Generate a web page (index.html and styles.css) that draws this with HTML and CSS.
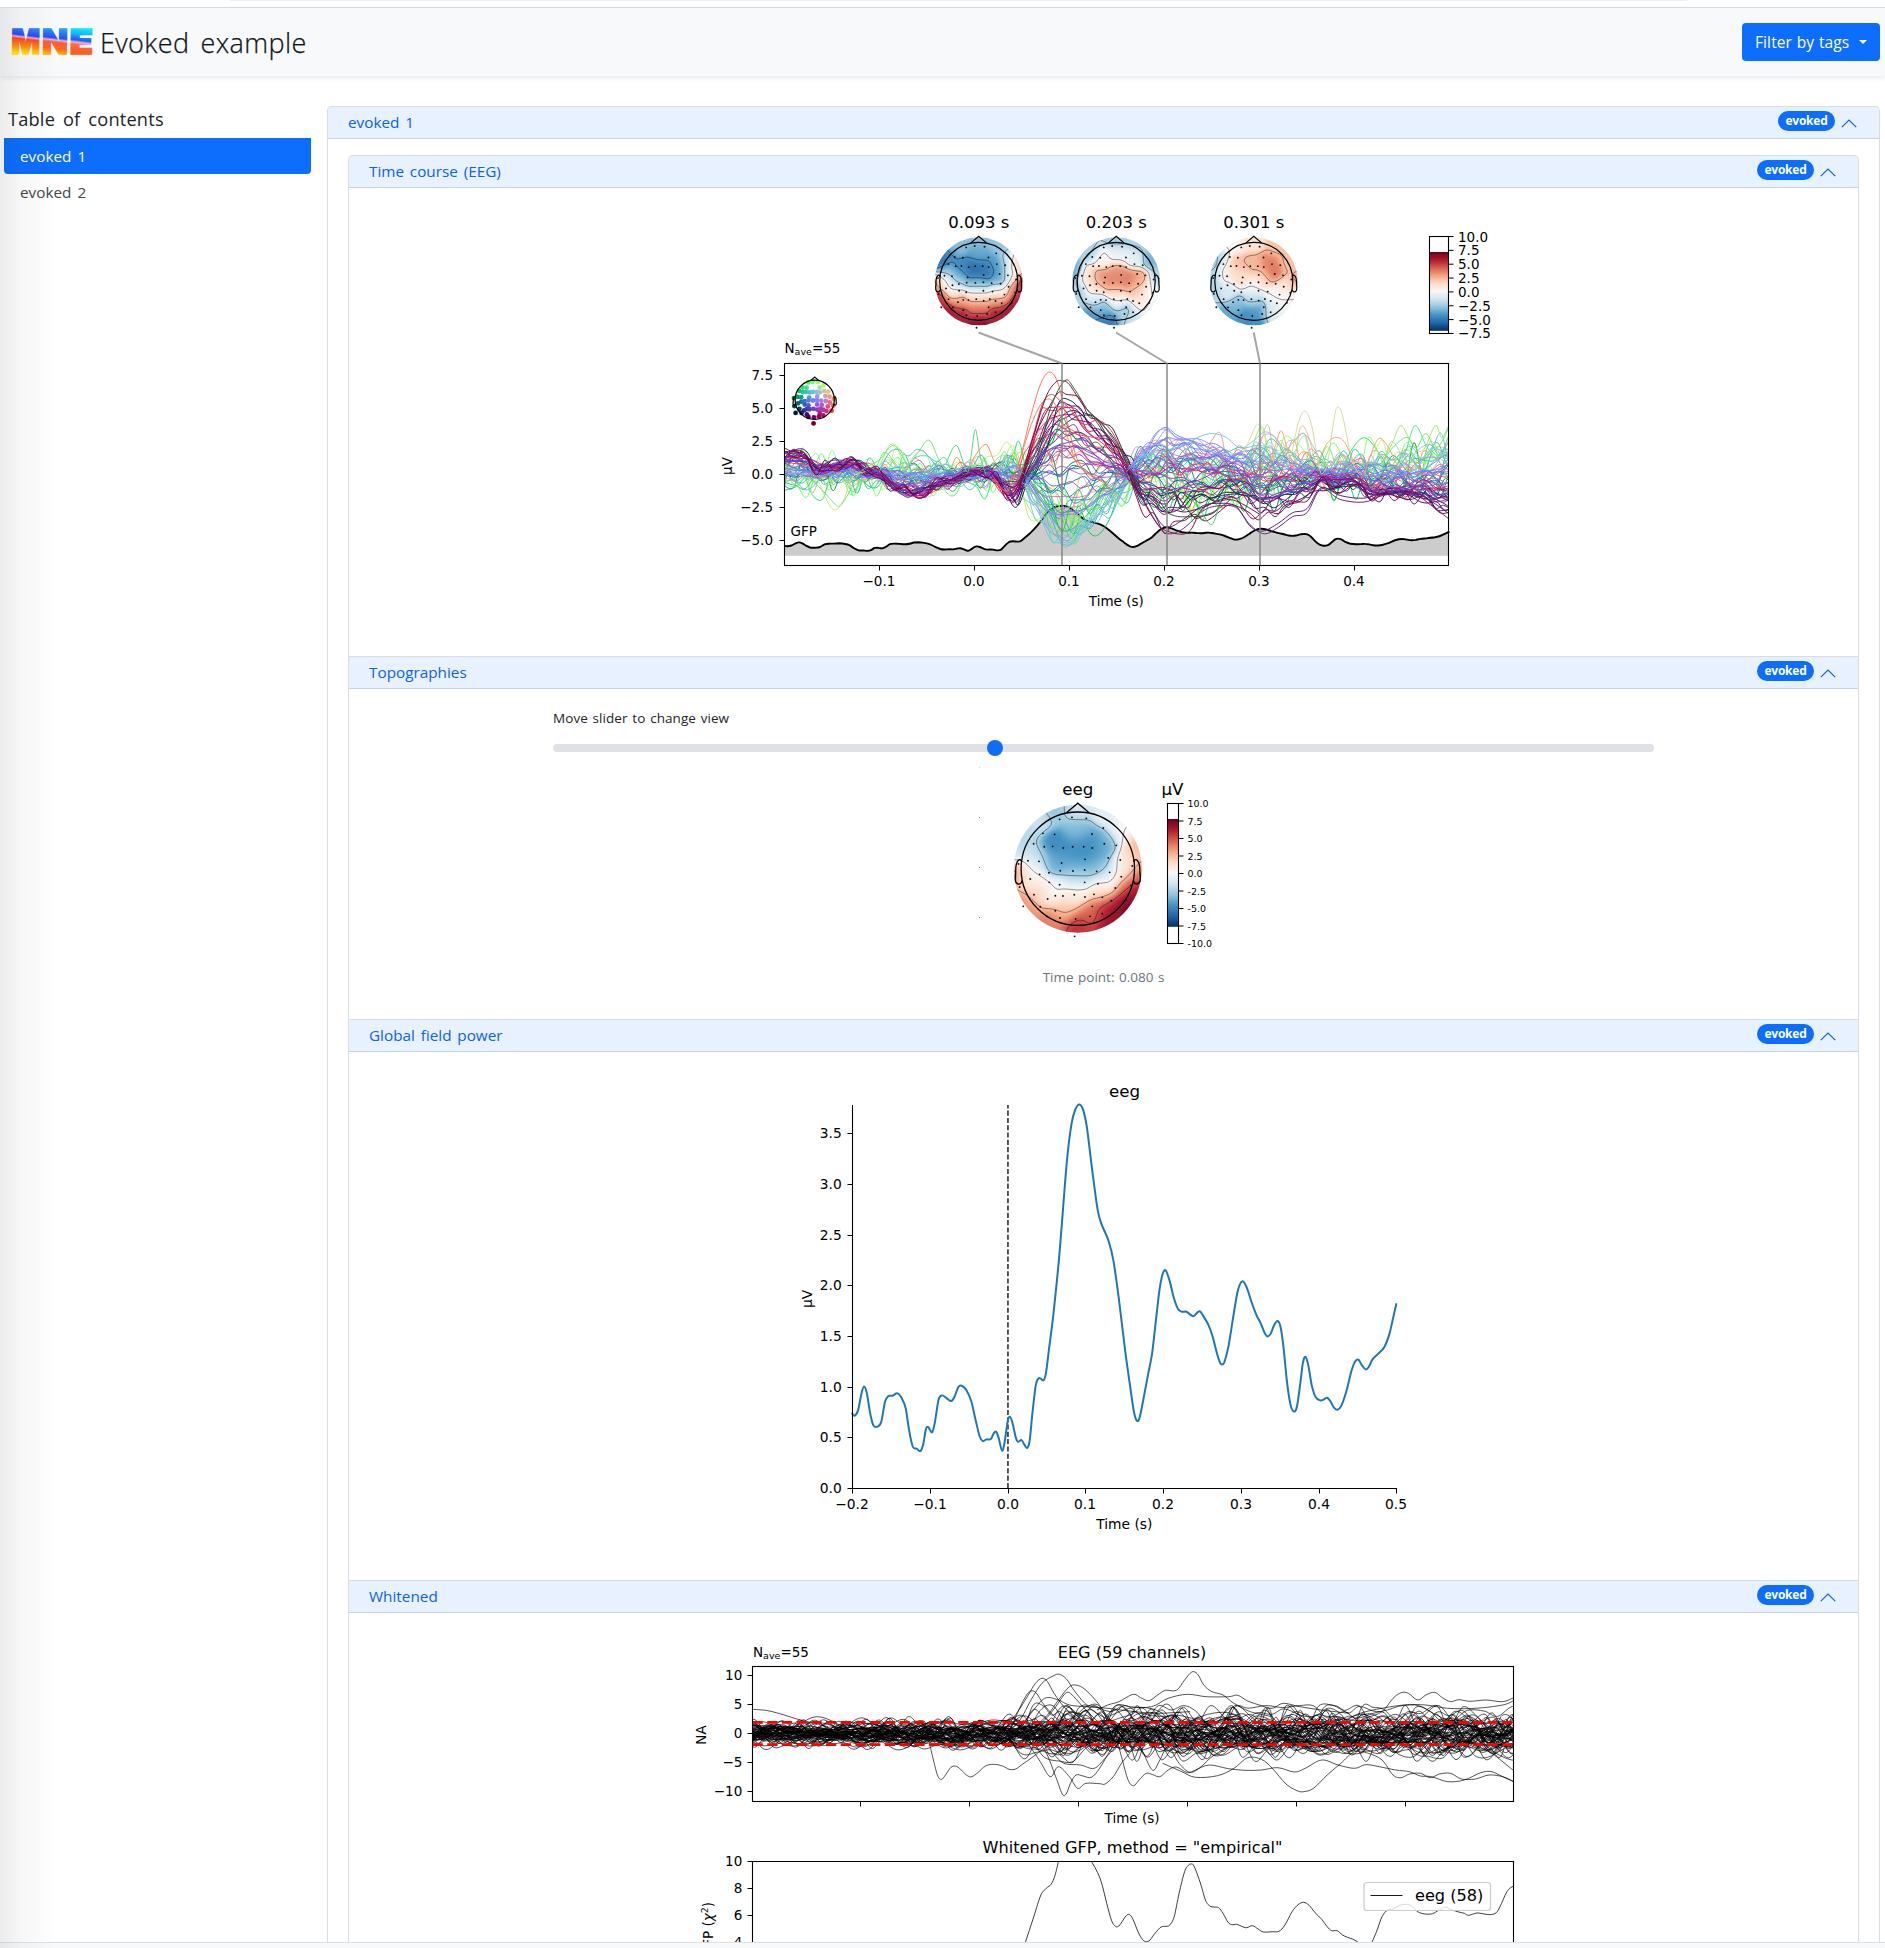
FILE: index.html
```html
<!DOCTYPE html>
<html lang="en">
<head>
<meta charset="utf-8">
<title>Evoked example</title>
<link rel="stylesheet" href="styles.css">
</head>
<body>
<div class="page">
  <div class="topline"><span class="topline-tab"></span></div>
  <header class="navbar">
    <div class="brand">
      <svg class="logo" width="84" height="36" viewBox="0 -2 84 36" role="img" aria-label="MNE">
        <defs>
          <linearGradient id="fillM" gradientUnits="userSpaceOnUse" x1="17" y1="2" x2="14" y2="28">
            <stop offset="0" stop-color="#2f86ff"/><stop offset=".28" stop-color="#2a49ff"/><stop offset=".36" stop-color="#e9a9d0"/><stop offset=".43" stop-color="#ff4a1e"/><stop offset=".7" stop-color="#ff8a14"/><stop offset="1" stop-color="#ffe90e"/>
          </linearGradient>
          <linearGradient id="fillN" gradientUnits="userSpaceOnUse" x1="46" y1="2" x2="43" y2="28">
            <stop offset="0" stop-color="#22a8ff"/><stop offset=".38" stop-color="#2d4cf2"/><stop offset=".46" stop-color="#d9b6e8"/><stop offset=".54" stop-color="#ff5a38"/><stop offset=".8" stop-color="#ff6a1c"/><stop offset="1" stop-color="#ffb414"/>
          </linearGradient>
          <linearGradient id="fillE" gradientUnits="userSpaceOnUse" x1="73" y1="2" x2="70" y2="28">
            <stop offset="0" stop-color="#10f0ff"/><stop offset=".25" stop-color="#14b4ff"/><stop offset=".48" stop-color="#2a55f0"/><stop offset=".57" stop-color="#d8b8e0"/><stop offset=".66" stop-color="#ff6a3a"/><stop offset="1" stop-color="#ff5a1e"/>
          </linearGradient>
        </defs>
        <g class="logo-text" lengthAdjust="spacingAndGlyphs">
          <text x="1.2" y="28" textLength="29" lengthAdjust="spacingAndGlyphs" fill="url(#fillM)" stroke="url(#fillM)">M</text>
          <text x="32" y="28" textLength="26" lengthAdjust="spacingAndGlyphs" fill="url(#fillN)" stroke="url(#fillN)">N</text>
          <text x="59.6" y="28" textLength="23.5" lengthAdjust="spacingAndGlyphs" fill="url(#fillE)" stroke="url(#fillE)">E</text>
        </g>
      </svg>
      <h1 class="title">Evoked example</h1>
    </div>
    <button class="filter">Filter by tags<span class="caret"></span></button>
  </header>
  <div class="content">
    <nav class="toc">
      <h2 class="toc-title">Table of contents</h2>
      <a class="toc-link active">evoked 1</a>
      <a class="toc-link">evoked 2</a>
    </nav>
    <main class="card outer">
      <div class="head"><span class="head-text">evoked 1</span><span class="badge">evoked</span><svg class="chev" viewBox="0 0 16 16"><path d="M.8 11.2 8 4l7.2 7.2"/></svg></div>
      <div class="outer-body">
        <div class="card inner">
          <div class="head"><span class="head-text">Time course (EEG)</span><span class="badge">evoked</span><svg class="chev" viewBox="0 0 16 16"><path d="M.8 11.2 8 4l7.2 7.2"/></svg></div>
          <svg id="course" class="figure tight" width="1509" height="468" viewBox="349 188 1509 468"></svg>
          <div class="head"><span class="head-text">Topographies</span><span class="badge">evoked</span><svg class="chev" viewBox="0 0 16 16"><path d="M.8 11.2 8 4l7.2 7.2"/></svg></div>
          <div class="topo">
            <div class="slider-label">Move slider to change view</div>
            <div class="slider"><span class="thumb"></span></div>
            <svg id="topo" class="figure" width="1101" height="205" viewBox="553 760 1101 205"></svg>
            <div class="caption">Time point: 0.080 s</div>
          </div>
          <div class="head"><span class="head-text">Global field power</span><span class="badge">evoked</span><svg class="chev" viewBox="0 0 16 16"><path d="M.8 11.2 8 4l7.2 7.2"/></svg></div>
          <svg id="gfp" class="figure" width="1509" height="528" viewBox="349 1052 1509 528"></svg>
          <div class="head"><span class="head-text">Whitened</span><span class="badge">evoked</span><svg class="chev" viewBox="0 0 16 16"><path d="M.8 11.2 8 4l7.2 7.2"/></svg></div>
          <svg id="white" class="figure tight" width="1509" height="400" viewBox="349 1613 1509 400"></svg>
        </div>
      </div>
    </main>
  </div>
  <footer class="footer"></footer>
  <div class="edge"></div>
</div>
<script src="charts.js"></script>
</body>
</html>
```
FILE: styles.css
```css
* { box-sizing: border-box; }
body { margin: 0; background: #fff; color: #212529; font-family: "Open Sans", "Noto Sans", sans-serif; }
.page { position: relative; width: 1885px; height: 1948px; overflow: hidden; display: flex; flex-direction: column; }
.topline { flex: none; height: 8px; border-bottom: 1px solid #d9dce1; background: #fff; display: flex; justify-content: center; }
.topline-tab { width: 1457px; height: 1px; margin-left: 32px; background: #f0f1f2; }
.navbar { flex: none; height: 68px; padding: 0 5px 0 10px; background: #f8f9fa; box-shadow: 0 2px 5px rgba(0,0,0,.09); display: flex; align-items: center; justify-content: space-between; z-index: 1; }
.brand { display: flex; align-items: center; gap: 6px; }
.logo { display: block; overflow: visible; margin-top: 0; }
.logo-text { font: 900 34.5px/1 "Inter", "DejaVu Sans", sans-serif; stroke-width: 1.4px; }
.title { margin: 0; padding-top: 2px; font-size: 27px; line-height: 36px; font-weight: 300; color: #111418; letter-spacing: .4px; word-spacing: 3.5px; -webkit-text-stroke: .25px #111418; }
.filter { width: 138px; height: 38px; margin-bottom: 0; padding: 0 0 0 13px; border: 0; border-radius: 4px; background: #0d6efd; color: #fff; font: 400 15.5px/36px "Open Sans", sans-serif; letter-spacing: .1px; word-spacing: .6px; display: flex; align-items: center; white-space: nowrap; }
.caret { margin: 0 0 0 10px; border-top: 4.5px solid #fff; border-left: 4.5px solid transparent; border-right: 4.5px solid transparent; }
.content { flex: 1; min-height: 0; display: flex; align-items: flex-start; gap: 16px; padding: 30px 5px 0 4px; overflow: hidden; }
.toc { width: 307px; }
.toc-title { margin: 0; padding: 0 0 0 4px; height: 32px; font-size: 18.2px; line-height: 27px; font-weight: 400; letter-spacing: .2px; word-spacing: 3px; }
.toc-link { display: block; height: 36px; padding-left: 16px; font-size: 15.3px; line-height: 36px; word-spacing: 2px; color: #43484d; }
.toc-link.active { background: #0d6efd; color: #fff; border-radius: 0 0 4px 4px; }
.card { border: solid #dadde0; border-width: 0 1px; border-radius: 5px 5px 0 0; }
.outer { width: 1553px; }
.outer-body { padding: 16px 20px 0; }
.inner { width: 1511px; }
.head { height: 33px; padding: 0 20px; background: #e7f1ff; border-top: 1px solid #d8dde2; border-bottom: 1px solid #c6d3e4; display: flex; align-items: center; color: #0c63e4; }
.card > .head:first-child { border-radius: 4px 4px 0 0; }
.head-text { flex: 1; font-size: 15.3px; line-height: 31px; font-weight: 400; word-spacing: 1.8px; }
.badge { width: 57px; height: 20px; margin: -4px 6px 0 0; border-radius: 10px; background: #0d6efd; color: #fff; text-align: center; font-size: 12px; line-height: 19px; font-weight: 700; letter-spacing: -.25px; }
.chev { width: 16px; height: 16px; margin: 2px 2px 0 0; fill: none; stroke: #0c63e4; stroke-width: 1.2; }
.figure { display: block; }
.topo { height: 330px; padding: 19px 204px 0; }
.slider-label { height: 36px; font-size: 13.5px; line-height: 20px; word-spacing: 1.2px; letter-spacing: .06px; }
.slider { height: 8px; margin-bottom: 8px; border-radius: 4px; background: #dee2e6; position: relative; }
.thumb { position: absolute; left: 434px; top: -4px; width: 16px; height: 16px; border-radius: 50%; background: #0d6efd; }
.caption { text-align: center; font-size: 13.5px; line-height: 20px; margin-top: 2px; color: #6c757d; word-spacing: 1px; }
.footer { flex: none; height: 6px; background: #f8f9fa; border-top: 1px solid #dde1e5; z-index: 1; }
.edge { position: absolute; left: 0; top: 8px; bottom: 0; width: 60px; z-index: 2; background: linear-gradient(90deg, rgba(0,0,0,.075), rgba(0,0,0,.03) 35%, transparent); }
.figure text { font-family: "DejaVu Sans", sans-serif; font-size: 13.8px; fill: #000; }
.figure.tight text { font-size: 13.5px; }
.figure .big { font-size: 16.67px; }
.figure.tight .big { font-size: 16.5px; }
.figure.tight .title-text { font-size: 16.15px; }
.figure .small { font-size: 9.5px; }
.figure .sub { font-size: 9.5px; }
.figure .math { font-style: italic; }
```
FILE: charts.js
```js
const NS = 'http://www.w3.org/2000/svg';
let seed = 7;
const rnd = () => { seed = (seed * 1664525 + 1013904223) >>> 0; return seed / 4294967296; };
const gauss = () => (rnd() + rnd() + rnd() + rnd() - 2) * 1.73;

function add(parent, name, attrs, html) {
  const e = document.createElementNS(NS, name);
  for (const k in attrs) e.setAttribute(k, attrs[k]);
  if (html !== undefined) e.innerHTML = html;
  parent.appendChild(e);
  return e;
}
const txt = (p, x, y, s, anchor, cls) => add(p, 'text', { x, y, 'text-anchor': anchor || 'middle', class: cls || '' }, s);
const vtxt = (p, x, y, s, anchor) => add(p, 'text', { transform: `translate(${x} ${y}) rotate(-90)`, 'text-anchor': anchor || 'middle' }, s);
const path = (p, d, attrs) => add(p, 'path', Object.assign({ d, fill: 'none', stroke: '#000' }, attrs));
const NAVE = 'N<tspan class="sub" dy="2.5">ave</tspan><tspan dy="-2.5">=55</tspan>';

/* Catmull-Rom spline through the points */
function spline(p) {
  let d = `M${p[0][0].toFixed(1)} ${p[0][1].toFixed(1)}`;
  for (let i = 0; i < p.length - 1; i++) {
    const a = p[i - 1] || p[i], b = p[i], c = p[i + 1], e = p[i + 2] || c;
    const v = [b[0] + (c[0] - a[0]) / 6, b[1] + (c[1] - a[1]) / 6, c[0] - (e[0] - b[0]) / 6, c[1] - (e[1] - b[1]) / 6, c[0], c[1]];
    d += 'C' + v.map(n => n.toFixed(1)).join(' ');
  }
  return d;
}
const pairs = s => s.trim().split(/\s+/).map(q => q.split(',').map(Number));
/* smooth interpolation in a table of [t, value] */
function lookup(tab, t) {
  if (t <= tab[0][0]) return tab[0][1];
  for (let i = 1; i < tab.length; i++) if (t <= tab[i][0]) {
    let u = (t - tab[i - 1][0]) / (tab[i][0] - tab[i - 1][0]);
    u = u * u * (3 - 2 * u);
    return tab[i - 1][1] + (tab[i][1] - tab[i - 1][1]) * u;
  }
  return tab[tab.length - 1][1];
}

/* diverging red-blue colour scale, -1..1 */
const STOPS = ['053061', '2166ac', '4393c3', '92c5de', 'd1e5f0', 'f7f7f7', 'fddbc7', 'f4a582', 'd6604d', 'b2182b', '67001f']
  .map(h => [0, 2, 4].map(i => parseInt(h.substr(i, 2), 16)));
function rdbu(v) {
  const s = Math.max(0, Math.min(9.999, (v + 1) * 5)), i = Math.floor(s), f = s - i;
  return 'rgb(' + STOPS[i].map((c, k) => Math.round(c + (STOPS[i + 1][k] - c) * f)).join(',') + ')';
}

/* electrode positions on a disk of radius 192 */
const SENSORS = pairs(`299,148 336,142 379,145 430,174 249,190 284,193 396,192 221,221 253,230 278,229 310,234 338,230 371,230 397,234
433,221 469,226 204,272 237,274 305,279 375,268 445,264 481,270 517,288 239,313 267,308 301,302 339,303 374,300 410,304 449,307 211,327
484,320 176,282 268,337 299,344 374,337 414,341 179,351 513,346 222,374 263,387 286,377 309,378 343,374 375,381 402,373 427,382 466,354
190,409 241,410 286,422 397,409 454,392 498,390 300,444 347,447 390,439 427,431 344,499`).map(p => [(p[0] - 353.5) / 192, (p[1] - 296) / 192]);

const MAPS = {
  a: pairs(`0,-.95,-.45 -.5,-.8,-.45 .5,-.8,-.42 -.75,-.55,-.72 -.92,-.45,-.9 -.1,-.3,-.84 .12,-.25,-.8 -.4,-.3,-.7 .4,-.4,-.6 0,-.6,-.55 -.5,-.05,-.42 .5,-.05,-.6 0,.05,-.55
    .68,-.5,-.2 .9,-.45,.3 .75,-.1,0 -.75,-.25,-.45 -.8,0,.05 -.98,.05,.45 -.6,.2,.02 0,.26,0 .5,.22,0 .98,.1,.95 .8,.2,.45 -.5,.45,.4 0,.45,.36 .5,.45,.45 -.9,.4,.8 .9,.4,.92
    0,.68,.64 -.5,.75,.84 .5,.75,.86 0,.97,.98 -.7,.7,.92 .7,.7,.95`),
  b: pairs(`0,-.05,.56 .3,-.05,.56 -.35,-.05,.5 0,-.22,.46 .55,-.05,.4 -.65,-.1,.18 0,.2,.36 .5,.2,.28 -.5,.15,.15 0,-.6,-.08 -.3,-.5,.05 .4,-.5,-.1 0,-.92,-.38 -.6,-.7,-.35 -.97,-.2,-.55
    -.9,.2,-.35 .8,-.5,-.5 .97,-.1,-.35 .8,.2,-.02 .6,.5,.12 0,.42,-.05 -.5,.45,-.2 -.3,.65,-.5 -.2,.92,-.78 -.6,.75,-.65 .2,.75,-.4 .4,.85,-.2 .8,.6,-.1 -.9,.45,-.35 .5,-.85,-.35`),
  c: pairs(`0,-.92,.15 .5,-.8,.3 -.5,-.8,.02 -.4,-.4,.33 0,-.4,.35 .35,-.4,.52 .45,-.2,.58 .8,-.4,.3 .95,0,.36 -.75,-.5,-.2 -.97,-.5,-.55 -.95,-.15,-.3 -.6,-.2,.1 -.3,-.1,.2 .2,-.05,.22
    .7,.1,.15 0,.15,0 .5,.3,0 .9,.35,0 -.6,.25,-.15 -.9,.3,-.33 0,.4,-.3 -.4,.55,-.45 .1,.7,-.6 -.2,.8,-.65 -.6,.75,-.55 .4,.7,-.15 .75,.65,-.03 0,.97,-.65`),
  d: pairs(`0,-.95,-.18 -.35,-.95,-.4 -.65,-.75,-.22 .5,-.85,-.1 .7,-.6,0 .97,-.35,.35 .85,-.1,.2 -.97,-.3,-.25 -.85,-.5,-.3 -.36,-.35,-.66 0,-.3,-.64 .23,-.35,-.66 0,-.6,-.45 -.35,-.1,-.52
    0,-.1,-.56 .35,-.05,-.48 .4,-.4,-.48 -.65,-.15,-.22 0,.12,-.3 .5,.15,-.1 -.35,.33,-.03 -.7,.1,.05 -.97,.05,.38 -.6,.4,.2 0,.4,.08 .4,.35,.15 .7,0,.05 .97,.1,.65 .75,.3,.55 -.2,.6,.28
    -.8,.6,.48 -.4,.85,.52 .2,.7,.6 0,.92,.75 .5,.6,.78 .8,.55,1 .9,.4,.95 .5,.85,.85 .65,.7,.96`)
};
function field(map, x, y) {
  let n = 0, w = 0;
  for (const [a, b, v] of map) {
    const r = (a - x) * (a - x) + (b - y) * (b - y), k = Math.exp(-r / .034) + 1e-3 * Math.exp(-r / .2);
    n += k * v; w += k;
  }
  return n / w;
}

function head(svg, cx, cy, R, r) {
  const g = { 'stroke-width': R > 50 ? 1.3 : 1.2 };
  add(svg, 'circle', Object.assign({ cx, cy, r, fill: 'none', stroke: '#000' }, g));
  const n = r * .2;
  path(svg, `M${cx - n} ${cy - r * .985}L${cx} ${cy - r * 1.155}L${cx + n} ${cy - r * .985}`, g);
  for (const s of [-1, 1])
    path(svg, `M${cx + s * r * .985} ${cy - r * .12}q${s * r * .03} ${-r * .07} ${s * r * .07} ${-r * .02}q${s * r * .045} ${r * .05} ${s * r * .04} ${r * .21}q${s * r * .03} ${r * .18} ${-s * r * .04} ${r * .2}q${-s * r * .06} ${r * .01} ${-s * r * .07} ${-r * .06}`, g);
}

function topomap(svg, id, cx, cy, R, r) {
  const map = MAPS[id], step = 2 / R, cell = 2;
  add(svg, 'clipPath', { id: 'clip-' + id }, `<circle cx="${cx}" cy="${cy}" r="${R}"/>`);
  const outer = add(svg, 'g', { 'clip-path': `url(#clip-${id})` });
  add(svg, 'filter', { id: 'soft-' + id }, '<feGaussianBlur stdDeviation="1.1"/>');
  const g = add(outer, 'g', { filter: `url(#soft-${id})` });
  const n = Math.ceil(R / cell) + 2;
  let cells = '';
  for (let j = -n; j <= n; j++) for (let i = -n; i <= n; i++) {
    if (i * i + j * j > (n + 1) * (n + 1)) continue;
    cells += `<rect x="${cx + i * cell - 1}" y="${cy + j * cell - 1}" width="2.2" height="2.2" fill="${rdbu(field(map, i * step, j * step))}"/>`;
  }
  g.innerHTML = cells;
  /* contour lines by marching squares */
  const grid = {};
  for (let j = -n; j <= n; j++) for (let i = -n; i <= n; i++) grid[i + ',' + j] = field(map, i * step, j * step);
  for (const level of [-.65, -.33, .001, .33, .67]) {
    let d = '';
    for (let j = -n; j < n; j++) for (let i = -n; i < n; i++) {
      const c = [[i, j], [i + 1, j], [i + 1, j + 1], [i, j + 1]], hit = [];
      for (let k = 0; k < 4; k++) {
        const p = c[k], q = c[(k + 1) % 4], a = grid[p] - level, b = grid[q] - level;
        if (a * b < 0) { const u = a / (a - b); hit.push((cx + (p[0] + (q[0] - p[0]) * u) * cell).toFixed(1) + ' ' + (cy + (p[1] + (q[1] - p[1]) * u) * cell).toFixed(1)); }
      }
      if (hit.length > 1) d += `M${hit[0]}L${hit[1]}`;
    }
    path(outer, d, { 'stroke-width': .6, opacity: .7 });
  }
  head(svg, cx, cy, R, r);
  for (const [x, y] of SENSORS) add(svg, 'circle', { cx: cx + x * R, cy: cy + y * R, r: .95, fill: '#111' });
}

function colorbar(svg, id, x, w, y0, y1, f0, f1) {
  add(svg, 'linearGradient', { id, x1: 0, y1: 1, x2: 0, y2: 0 },
    STOPS.map((c, i) => `<stop offset="${i / 10}" stop-color="rgb(${c})"/>`).join(''));
  add(svg, 'rect', { x, y: f0, width: w, height: f1 - f0, fill: `url(#${id})` });
  add(svg, 'rect', { x, y: y0, width: w, height: y1 - y0, fill: 'none', stroke: '#000', 'stroke-width': 1.1 });
}

/* field power over time, shared by two figures: [seconds, microvolt] */
const POWER = pairs(`172,1060 178,1067 186,1050 194,1000 200,979 207,1000 214,1055 222,1095 232,1100 241,1085 250,1025 258,1008 268,1007 279,1000
290,1015 299,1045 307,1110 316,1160 325,1166 334,1173 341,1150 347,1107 352,1101 357,1110 362,1116 368,1090 377,1020 385,1006 396,1014 407,1023
415,1010 424,981 432,977 443,990 455,1025 465,1080 475,1130 482,1143 491,1138 501,1137 508,1120 514,1115 520,1135 528,1172 534,1145 541,1085 546,1070
552,1085 560,1130 565,1145 574,1140 580,1152 587,1164 593,1145 600,1060 608,975 616,954 626,961 632,940 640,860 650,760 662,610 670,490 682,300
693,190 702,148 711,133 720,148 729,200 742,330 755,450 765,495 780,540 792,600 805,715 820,870 832,980 841,1055 848,1082 855,1070 866,1000 875,940
884,880 895,760 904,670 914,630 924,655 935,710 945,745 954,755 966,755 975,764 983,768 991,758 998,754 1006,768 1018,795 1028,830 1037,875
1045,907 1050,913 1056,905 1066,855 1078,760 1088,690 1098,664 1108,680 1120,725 1132,765 1142,790 1152,820 1159,829 1166,820 1174,795 1182,783
1189,800 1196,860 1204,960 1212,1030 1220,1054 1228,1040 1236,970 1242,910 1248,890 1255,915 1263,975 1272,1010 1283,1021 1292,1018 1300,1013
1308,1025 1316,1043 1324,1049 1333,1038 1345,995 1357,935 1366,905 1374,899 1382,915 1391,928 1399,920 1408,897 1422,880 1436,860 1448,820 1457,770 1464,732`)
  .map(([x, y]) => [(x - 172) / 1292 * .7 - .2, (1285 - y) / 304.2]);

/* ---- Time course ---- */
(function () {
  const s = document.getElementById('course');
  const X = t => 974.4 + t * 950, Y = v => 474.4 - v * 13.2;
  [['a', 978.7, '0.093 s'], ['b', 1116.2, '0.203 s'], ['c', 1253.8, '0.301 s']].forEach(([id, cx, label]) => {
    txt(s, cx, 228, label, 'middle', 'big');
    topomap(s, id, cx, 281.3, 44, 39);
  });
  colorbar(s, 'bar1', 1429.5, 19, 236.5, 333.5, 252, 330.8);
  ['10.0', '7.5', '5.0', '2.5', '0.0', '−2.5', '−5.0', '−7.5'].forEach((l, i) => {
    const y = 236.5 + i * 13.85;
    path(s, `M1448.5 ${y}h5`, {});
    txt(s, 1458, y + 5, l, 'start');
  });
  txt(s, 784.5, 352.7, NAVE, 'start');

  const power = POWER.map(([t, v]) => [X(t), 555.7 - v * 13.2]);
  const line = spline(power);
  path(s, line + 'L1448.6 555.7L784.4 555.7Z', { fill: '#ccc', stroke: 'none' });
  path(s, line, { 'stroke-width': 1.9 });

  const G1 = [[.025, 0], [.04, -.2], [.05, .0], [.065, .45], [.08, .86], [.093, 1], [.105, .96], [.13, .6], [.15, .34], [.168, -.02], [.2, 0]];
  const G2 = [[.155, 0], [.185, .75], [.203, 1], [.22, .9], [.25, .72], [.275, .5], [.3, .1], [.33, 0]];
  const G3 = [[.275, 0], [.301, 1], [.32, .88], [.35, .58], [.367, .15], [.39, .35], [.43, .2], [.47, .22], [.5, .6]];
  const PRE = [[-.2, 1.4], [-.185, 1.5], [-.165, .5], [-.145, .6], [-.13, 1], [-.11, .2], [-.1, .1], [-.085, -1], [-.055, -1.4], [-.035, -.6], [0, .1], [.015, .1], [.04, -1.2], [.06, 0]];
  add(s, 'clipPath', { id: 'courseBox' }, '<rect x="784.5" y="363.5" width="664" height="202"/>');
  const g = add(s, 'g', { 'clip-path': 'url(#courseBox)', fill: 'none', 'stroke-width': .95 });
  const order = SENSORS.slice().sort((p, q) => Math.abs(q[0]) + p[1] * .6 - Math.abs(p[0]) - q[1] * .6);
  order.forEach(([x, y]) => {
    const a = field(MAPS.a, x, y) * 6.6, b = field(MAPS.b, x, y) * 5.2, d = field(MAPS.c, x, y) * 4.6;
    const back = Math.max(0, Math.min(1, (y + .02) / .5));
    const front = Math.max(0, -y), edge = Math.hypot(x, y);
    const amp = .2 + (1 - back * .85) * (.85 * Math.max(0, edge - .2) + .45 * front);
    const color = tone(x, y), pts = [];
    const lag = -x * .012, end = front * (.9 + gauss() * .5);
    const follow = Math.max(back, .12);
    for (let t = -.2; t < .52; t += .0085 + rnd() * .0045) {
      let v = a * lookup(G1, t - lag) + b * lookup(G2, t) + d * lookup(G3, t);
      if (t < .06) v += lookup(PRE, t) * (follow - front * .5);
      v += gauss() * amp * (t > .17 ? 1.2 : 1);
      if (t > .41) v += end * 1.6 * Math.min(1, (t - .41) / .09) - back * .9 + front * .5;
      pts.push([X(t), Y(Math.max(-5.2, Math.min(t > .15 ? 3.7 : 6.2, v)))]);
    }
    add(g, 'path', { d: spline(pts), stroke: color });
  });
  const extra = [
    ['#fb6f5e', '0.03,-1 0.045,0.5 0.06,4.6 0.07,6.9 0.079,7.75 0.088,6.9 0.098,3.9 0.108,1.2 0.12,0 0.14,-.6'],
    ['#ff7d4a', '0.02,-.4 0.035,-1.2 0.048,1.2 0.06,3.8 0.07,5.3 0.079,5.7 0.088,4.9 0.098,2.8 0.108,.8 0.12,.1 0.135,-.6 0.15,-1.6'],
    ['#d8345e', '0.02,-.2 0.035,-1.4 0.05,0 0.062,3 0.072,5.4 0.081,6.05 0.09,5.6 0.1,5 0.115,3.8 0.13,4.1 0.145,3.2 0.165,.2'],
    ['#e84a8a', '0.02,-.2 0.035,-1.3 0.05,.4 0.065,3 0.08,4.2 0.092,3.6 0.105,3.1 0.125,2.8 0.14,2.6 0.16,.6'],
    ['#6a1030', '0.03,-.6 0.045,-.8 0.06,2.4 0.075,5.8 0.085,6.95 0.092,7.1 0.1,6.8 0.115,5.2 0.13,4.1 0.15,2.4 0.17,-.9 0.19,-3.5 0.203,-4.3 0.225,-4.4 0.24,-2.6 0.26,-2 0.275,-2 0.3,-3'],
    ['#285c30', '0.03,-.5 0.05,-.4 0.065,1 0.08,5 0.095,7.1 0.105,6.5 0.12,4.8 0.135,3.8 0.155,1.6 0.17,-.6 0.203,-2.9 0.23,-3.2 0.25,-2.9 0.27,-1.9'],
    ['#1f8f3a', '0.04,0 0.06,1 0.07,2.8 0.08,2.2 0.092,4.2 0.1,3.4 0.115,2 0.13,2.4 0.15,.4 0.17,-.3'],
    ['#d9d5a0', '0.325,.2 0.333,1.4 0.341,3.9 0.348,4.8 0.355,3.7 0.363,.5 0.367,.1 0.372,1 0.379,4.4 0.383,5.1 0.388,4.3 0.397,1.2 0.405,0'],
    ['#4fd67a', '-0.03,.8 -0.019,2.2 -0.008,.2 -0.004,1.2 0.001,3.4 0.006,1.4 0.012,0'],
    ['#c8e86a', '-.165,-.4 -.155,-2 -.147,-2.7 -.138,-2 -.128,-.2 -.115,.2'],
    ['#6fe07a', '-.175,-.2 -.16,-1.2 -.15,-2 -.142,-2.4 -.132,-1.4 -.12,.2 -.1,1.1 -.085,2.2 -.07,.8 -.06,1.6 -.048,2.6 -.038,1.2 -.03,.2'],
    ['#5cb8c4', '-.1,.2 -.09,1.6 -.08,1.9 -.07,1.4 -.06,1.9 -.05,1.5 -.04,.6'],
    ['#7fe060', '0.05,-.6 0.065,-1.6 0.08,-3.8 0.09,-4.3 0.1,-4 0.11,-2.2 0.12,-2.6 0.135,-2.4 0.15,-.9 0.165,-.6'],
    ['#33b85a', '0.05,.2 0.065,-1 0.08,-2.6 0.092,-4.3 0.1,-2.6 0.11,-1.2 0.122,-3 0.135,-1 0.15,.3'],
    ['#3fce6a', '0.225,-1.6 0.237,-2.6 0.25,-3.8 0.26,-1.8 0.27,-.6'],
    ['#e2db9a', '0.28,1 0.29,2.7 0.298,3.8 0.305,3 0.315,.9'],
    ['#f7a270', '0.31,.4 0.317,2.2 0.323,3.3 0.33,1.8 0.338,.1'],
    ['#fba06c', '0.41,0 0.42,2 0.427,2.75 0.436,2 0.447,.4'],
    ['#f7a468', '0.36,.6 0.37,2.2 0.38,2.8 0.39,2.4 0.4,.8'],
    ['#a8b4c4', '0.32,1 0.335,2.4 0.346,3.1 0.356,2.2 0.366,.8'],
    ['#7a86ff', '0.16,.4 0.18,1.7 0.192,3.1 0.202,3.55 0.215,2.9 0.235,2.4 0.25,1.9 0.27,.9'],
    ['#9a90ff', '0.16,.2 0.18,1.9 0.192,3.2 0.202,3.4 0.215,2.7 0.235,2.7 0.25,2.2 0.27,1.2'],
    ['#7cc4d8', '0.165,.8 0.18,1.5 0.2,1.8 0.22,2.2 0.235,2.8 0.25,3.1 0.265,2.8 0.28,2 0.3,2.2 0.32,1.8'],
    ['#6a1a78', '0.165,0 0.18,-2.2 0.195,-4 0.205,-4.5 0.22,-4.1 0.24,-2.8 0.255,-2.4 0.275,-2.5 0.29,-3.8 0.305,-4.5 0.32,-4 0.335,-3.2 0.35,-2.9 0.365,-1.1 0.385,-1.9 0.41,-2.1 0.43,-1.6 0.46,-1.4 0.48,-2.3 0.5,-3.4'],
    ['#43207c', '0.165,.2 0.18,-1.7 0.195,-3.6 0.205,-4 0.22,-3.4 0.24,-2.4 0.255,-2.2 0.275,-2.4 0.29,-3.9 0.303,-4.3 0.32,-3.7 0.335,-2.9 0.35,-2.6 0.365,-1 0.385,-1.6 0.41,-1.8 0.43,-1.4 0.46,-1.3 0.48,-2 0.5,-3'],
    ['#a4e85a', '0.43,1 0.44,2.4 0.449,3.7 0.46,2.4 0.472,1.8 0.485,3.7 0.492,2.8 0.5,3.8'],
    ['#58f060', '0.41,.2 0.425,.6 0.44,2 0.455,2.8 0.465,2 0.475,3.1 0.485,2 0.493,2.6 0.5,3.7'],
    ['#5fd0da', '0.05,-1.8 0.065,-2.6 0.08,-4.9 0.09,-5.2 0.098,-5.5 0.11,-4.4 0.12,-3.3 0.13,-3.6 0.14,-2 0.155,-.1']
  ];
  extra.forEach(([c, p]) => add(g, 'path', { d: spline(pairs(p).map(([t, v]) => [X(t), Y(v)])), stroke: c }));

  add(s, 'rect', { x: 784.5, y: 363.5, width: 664, height: 202, fill: 'none', stroke: '#000', 'stroke-width': 1.1 });
  [[978.5, 1062], [1116, 1167], [1253.7, 1260]].forEach(([a, b]) => path(s, `M${a} 332.5L${b} 363.5V565`, { stroke: '#808080', 'stroke-opacity': .7, 'stroke-width': 2, 'stroke-linejoin': 'round' }));
  ['7.5', '5.0', '2.5', '0.0', '−2.5', '−5.0'].forEach((l, i) => {
    const y = 375.5 + i * 33;
    path(s, `M779.5 ${y}h5`, {});
    txt(s, 773, y + 4.6, l, 'end');
  });
  ['−0.1', '0.0', '0.1', '0.2', '0.3', '0.4'].forEach((l, i) => {
    const x = 879.5 + i * 95;
    path(s, `M${x} 565.5v5`, {});
    txt(s, x - .6, 586, l);
  });
  txt(s, 1116.3, 606, 'Time (s)');
  vtxt(s, 732, 466, 'µV');
  txt(s, 790.5, 536, 'GFP', 'start');
  for (const [x, y] of SENSORS) add(s, 'circle', { cx: 814.7 + x * 22.4, cy: 399.7 + y * 22.4, r: 2.4, fill: tone(x, y) });
  head(s, 814.7, 399.7, 23, 19.6);

  function tone(x, y) {
    const r = Math.hypot(x, y), z = Math.max(.18, 1 - Math.pow(r, 1.8) * .95);
    const q = v => Math.round(255 * Math.max(0, Math.min(1, v)));
    return `rgb(${q(.48 + x * .66)},${q(.52 - y * .68)},${q(z)})`;
  }
})();

/* ---- Topographies ---- */
(function () {
  const s = document.getElementById('topo');
  txt(s, 1077.8, 795, 'eeg', 'middle', 'big');
  txt(s, 1172.5, 795, 'µV', 'middle', 'big');
  topomap(s, 'd', 1077.8, 868.7, 64, 56.7);
  colorbar(s, 'bar2', 1167.5, 11, 803.5, 943.5, 819, 926.8);
  ['10.0', '7.5', '5.0', '2.5', '0.0', '-2.5', '-5.0', '-7.5', '-10.0'].forEach((l, i) => {
    const y = 803.5 + i * 17.5;
    path(s, `M1178.5 ${y}h5`, {});
    txt(s, 1187.5, y + 3.5, l, 'start', 'small');
  });
  [817, 867, 917].forEach(y => add(s, 'rect', { x: 979, y, width: 1, height: 1, fill: '#777' }));
  add(s, 'rect', { x: 979, y: 767, width: 1, height: 1, fill: '#ccc' });
})();

/* ---- Global field power ---- */
(function () {
  const s = document.getElementById('gfp');
  const X = t => 852.2 + (t + .2) * 777.3, Y = v => 1488.4 - v * 101.4;
  path(s, `M${X(0) + .3} 1488V1105`, { 'stroke-width': 1.3, 'stroke-dasharray': '5.1 2.2' });
  path(s, spline(POWER.map(([t, v]) => [X(t), Y(v)])), { stroke: '#1f77b4', 'stroke-width': 2, 'stroke-linecap': 'round' });
  path(s, 'M852.5 1105V1488.5H1397', { 'stroke-width': 1.1 });
  ['0.0', '0.5', '1.0', '1.5', '2.0', '2.5', '3.0', '3.5'].forEach((l, i) => {
    const y = Math.round(Y(i / 2) - .4) + .5;
    path(s, `M847.5 ${y}h5`, {});
    txt(s, 841.8, y + 4.7, l, 'end');
  });
  ['−0.2', '−0.1', '0.0', '0.1', '0.2', '0.3', '0.4', '0.5'].forEach((l, i) => {
    const x = Math.round(X(-.2 + i / 10)) + .5;
    path(s, `M${x} 1488.5v5`, {});
    txt(s, x - .5, 1509, l);
  });
  txt(s, 1124.5, 1097, 'eeg', 'middle', 'big');
  txt(s, 1124.3, 1529, 'Time (s)');
  vtxt(s, 812, 1299, 'µV');
})();

/* ---- Whitened ---- */
(function () {
  const s = document.getElementById('white');
  const X = t => 752.4 + (t + .2) * 1087.3, Y = v => 1733.4 - v * 5.8;
  add(s, 'clipPath', { id: 'whiteBox' }, '<rect x="752.5" y="1666" width="761" height="136"/>');
  const g = add(s, 'g', { 'clip-path': 'url(#whiteBox)', fill: 'none', stroke: '#000', 'stroke-width': .8, 'stroke-opacity': .85 });
  const env = [[-.2, 1.05], [.02, 1.15], [.05, 1.4], [.08, 1.75], [.13, 1.8], [.2, 1.65], [.3, 1.6], [.4, 1.6], [.5, 1.7]];
  for (let c = 0; c < 62; c++) {
    const pts = [], drift = gauss() * .75, step = .0075 + rnd() * .004;
    let slow = 0;
    for (let t = -.21; t < .52; t += step + rnd() * .005) {
      slow = slow * .75 + gauss() * .42;
      const v = (gauss() * .75 + slow + (t > .05 ? drift : 0)) * lookup(env, t);
      const cap = t < .03 ? 2.9 : 4.8;
      pts.push([X(t), Y(Math.max(-cap, Math.min(cap, v)))]);
    }
    add(g, 'path', { d: spline(pts) });
  }
  /* channels that leave the band, in figure units of 1.8233 by 3 */
  [`132,238 160,242 190,255 215,268 240,278 270,290`,
   `455,340 462,390 470,438 477,448 484,435 494,412 504,409 514,422 524,437 532,440 543,428 557,408 572,403 588,408 600,418 612,417 625,402 640,385 660,360 690,330`,
   `590,300 605,270 620,235 635,195 648,160 660,145 670,155 682,190 700,230 720,260 740,280`,
   `600,300 620,270 640,210 660,160 680,138 692,133 705,148 718,180 738,220 760,250 790,275`,
   `600,310 615,250 630,200 640,183 650,190 664,225 690,270 720,300`,
   `640,300 670,255 690,210 710,170 724,166 738,178 760,215 780,260 800,290`,
   `600,310 620,290 640,250 665,205 690,210 710,225 740,230 780,235 830,245 870,250 930,245`,
   `640,300 665,270 685,230 700,195 708,187 718,200 740,240 765,280`,
   `640,320 665,360 685,440 697,492 704,492 712,460 722,435 735,438 750,442 765,415 785,360 800,330`,
   `630,330 655,390 675,440 690,410 710,440 725,475 740,460 765,461 775,462 790,440 805,400 820,370`,
   `650,320 680,370 700,400 730,405 755,415 775,385 800,340`,
   `795,320 805,380 817,450 827,467 837,450 850,430 862,434 875,440 890,420 905,411 925,428 940,420 965,405 1000,416 1030,421 1060,420 1090,413 1120,426 1140,415 1170,390 1200,405 1230,415 1250,404 1275,410 1305,420 1330,425 1350,438 1370,440 1400,455 1430,450 1460,428 1480,425 1500,440 1520,455`,
   `760,240 780,225 800,215 826,193 840,203 855,212 870,196 885,181 905,181 920,150 930,130 937,125 945,135 955,165 970,185 990,195 1010,220 1040,245 1080,260`,
   `780,260 820,235 860,230 890,205 925,193 960,200 1000,200 1017,196 1035,213 1060,227 1080,235 1100,220 1130,230 1170,240 1220,250`,
   `830,320 845,370 862,421 875,390 890,350 910,400 930,427 950,410 970,380 1000,350 1030,330`,
   `880,400 915,425 940,442 980,437 1010,415 1035,383 1060,388 1080,415 1105,462 1125,482 1137,485 1155,475 1180,435 1205,400 1230,365 1255,370 1280,390 1300,435 1315,443 1330,432 1350,430 1368,443 1385,432 1405,430 1425,447 1450,447 1475,435 1500,440 1520,455`,
   `1220,290 1250,265 1280,245 1300,205 1315,188 1328,190 1345,210 1360,195 1376,187 1390,203 1405,215 1420,209 1440,214 1470,210 1500,215 1520,203`,
   `1200,280 1240,250 1280,235 1320,225 1360,225 1400,235 1450,235 1500,225 1520,212`,
   `1420,330 1450,345 1480,370 1500,395 1520,422`
  ].forEach(p => add(g, 'path', { d: spline(pairs(p).map(([x, y]) => [680 + x / 1.8233, 1630 + y / 3])) }));
  [1722.4, 1744.6].forEach(y => path(s, `M752.5 ${y}H1513.5`, { stroke: '#f00', 'stroke-width': 2.8, 'stroke-dasharray': '10.3 4.4' }));
  add(s, 'rect', { x: 752.5, y: 1666.5, width: 761, height: 135, fill: 'none', stroke: '#000', 'stroke-width': 1.1 });
  ['10', '5', '0', '−5', '−10'].forEach((l, i) => {
    const y = 1675.5 + i * 29;
    path(s, `M747.5 ${y}h5`, {});
    txt(s, 742.3, y + 4.7, l, 'end');
  });
  [860.5, 969.5, 1078.5, 1187.5, 1296.5, 1405.5].forEach(x => path(s, `M${x} 1801.5v5`, {}));
  txt(s, 753, 1656.5, NAVE, 'start');
  txt(s, 1132, 1658, 'EEG (59 channels)', 'middle', 'title-text');
  txt(s, 1132, 1823.3, 'Time (s)');
  vtxt(s, 706, 1735, 'NA');

  txt(s, 1132.5, 1853, 'Whitened GFP, method = "empirical"', 'middle', 'title-text');
  const power = [
    `628,945 630,936 645,860 658,795 668,775 677,762 684,735 690,694`,
    `750,694 759,720 768,755 778,820 787,872 794,889 800,888 808,870 813,858 819,853 826,868 835,905 843,928 850,935 857,930 866,910 877,891 886,889 893,885 901,860 910,790 920,725 927,706 932,702 937,708 948,755 958,810 966,828 974,831 982,833 990,850 999,876 1006,884 1015,883 1024,889 1033,893 1044,887 1054,897 1064,906 1080,905 1092,904 1103,885 1116,845 1127,824 1137,817 1147,826 1158,848 1170,868 1180,890 1188,902 1198,902 1208,915 1217,922 1226,927 1235,935 1245,945 1258,945 1262,935 1270,905 1280,860 1290,840 1301,836 1312,826 1324,823 1334,828 1345,845 1358,852 1372,851 1384,840 1396,832 1408,840 1420,846 1430,850 1438,856 1453,849 1470,853 1482,853 1490,845 1498,820 1506,790 1513,775 1520,768`];
  power.forEach(p => path(s, spline(pairs(p).map(([x, y]) => [680 + x / 1.8233, 1630 + y / 3])), { 'stroke-width': .9, 'stroke-opacity': .85 }));
  path(s, 'M752.5 1990V1861.5H1513.5V1990', { 'stroke-width': 1.1 });
  ['10', '8', '6', '4'].forEach((l, i) => {
    const y = 1861.5 + i * 27;
    path(s, `M747.5 ${y}h5`, {});
    txt(s, 742.3, y + 4.7, l, 'end');
  });
  vtxt(s, 713, 1902, 'GFP (<tspan class="math">χ</tspan><tspan class="sub" dy="-5">2</tspan><tspan dy="5">)</tspan>', 'end');
  add(s, 'rect', { x: 1364, y: 1882.5, width: 126.5, height: 28, rx: 3, fill: '#fff', 'fill-opacity': .8, stroke: '#ccc', 'stroke-width': 1.2 });
  path(s, 'M1370.5 1895.5H1402.5', { 'stroke-width': .9 });
  txt(s, 1415, 1901, 'eeg (58)', 'start', 'title-text');
})();
```
